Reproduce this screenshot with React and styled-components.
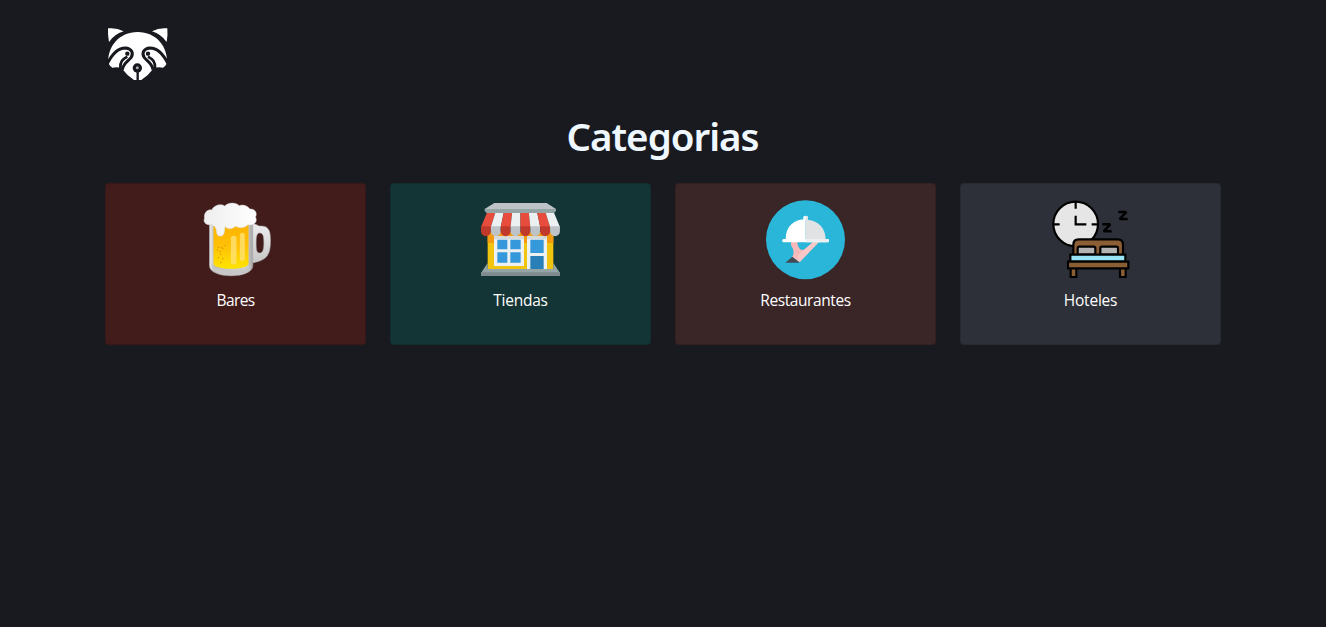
import React from 'react';
import styled, { createGlobalStyle } from 'styled-components';

const GlobalStyle = createGlobalStyle`
  *, *::before, *::after { box-sizing: border-box; }
  body {
    margin: 0;
    background: #191a1f;
    color: #f0f8ff;
    font: 400 16px/24px "Open Sans", "Noto Sans", sans-serif;
  }
`;

const Container = styled.main`
  width: 1140px;
  margin: 0 auto;
  padding: 26px 12px 0;
`;

const Logo = styled.svg`
  display: block;
  width: 66px;
  height: 56px;
`;

const Title = styled.h1`
  margin: 30px 0 23px;
  font-family: "Noto Sans", "Open Sans", sans-serif;
  font-size: 38.5px;
  font-weight: 600;
  line-height: 48px;
  letter-spacing: -1px;
  text-indent: -1px;
  text-align: center;
`;

const Grid = styled.section`
  display: grid;
  grid-template-columns: repeat(4, 1fr);
  gap: 24px;
`;

const Card = styled.article`
  display: flex;
  flex-direction: column;
  align-items: center;
  height: 162px;
  padding: 16px;
  border: 1px solid rgba(0, 0, 0, 0.125);
  border-radius: 4px;
  background: ${(p) => p.$tone};
`;

const Picture = styled.svg`
  display: block;
  width: 80px;
  height: 80px;
`;

const Label = styled.p`
  margin: 8px 0 0;
  color: #fff;
  font-size: 15.5px;
  letter-spacing: ${(p) => p.$tracking};
`;

const Raccoon = () => (
  <Logo viewBox="21 24 198 168" aria-label="Logo">
    <path fill="#fff" d="M30 31Q55 28 77 40Q48 49 33 72Q29 50 30 31ZM208 31Q184 28 162 40Q190 49 206 72Q210 50 208 31Z" />
    <path fill="#fff" d="M31 136C28 86 63 42 119 42S210 86 207 136Q203 144 195 149Q180 145 167 151Q152 172 130 186H108Q86 172 71 151Q58 145 43 149Q35 144 31 136Z" />
    <g fill="none" stroke="#17181d">
      <path strokeWidth="9" d="M28 137C41 111 59 90 82 90C101 91 108 106 99 119C90 130 76 135 73 155M210 137C197 111 179 90 156 90C137 91 130 106 139 119C148 130 162 135 165 155" />
      <path strokeWidth="8" d="M67 150C66 131 73 124 88 116M171 150C172 131 165 124 150 116" />
      <path strokeWidth="7" d="M119 158V190" />
    </g>
    <circle cx="88" cy="107" r="6.5" fill="#17181d" />
    <circle cx="150" cy="107" r="6.5" fill="#17181d" />
    <circle cx="118" cy="150" r="14" fill="#17181d" />
    <circle cx="118" cy="149" r="4.5" fill="#aaa" />
  </Logo>
);

const Beer = () => (
  <Picture viewBox="1.5 15 240 240" aria-hidden="true">
    <defs>
      <linearGradient id="glass">
        <stop stopColor="#ededed" /><stop offset=".12" stopColor="#bdbdbd" /><stop offset=".85" stopColor="#d2d2d2" /><stop offset="1" stopColor="#a3a3a3" />
      </linearGradient>
      <linearGradient id="ale" x2="0" y2="1">
        <stop stopColor="#ffb300" /><stop offset=".5" stopColor="#ffc107" /><stop offset="1" stopColor="#ffe500" />
      </linearGradient>
      <linearGradient id="foam">
        <stop stopColor="#eee" /><stop offset="1" stopColor="#fff" />
      </linearGradient>
      <linearGradient id="handle" x2="0" y2="1">
        <stop stopColor="#eee" /><stop offset="1" stopColor="#c6c6c6" />
      </linearGradient>
    </defs>
    <path fill="url(#handle)" stroke="#aaa" strokeWidth="1.5" fillRule="evenodd" d="M168 85Q181 87 191 93C218 91 225 104 225 135C225 180 216 195 170 204ZM193 114C186 113 182 120 182 142C182 165 183 174 192 174C203 174 205 162 205 143C205 121 202 115 193 114Z" />
    <path fill="url(#glass)" stroke="#b5b5b5" strokeWidth="1.5" d="M42 76H172V213C170 252 44 252 42 213Z" />
    <path fill="#c7c7c7" d="M48 205Q53 225 108 226T166 205Q170 241 108 241T48 205Z" />
    <path fill="url(#ale)" d="M54 88H159V207C155 226 58 226 54 207Z" />
    <g fill="#ffe273" opacity=".8">
      <rect x="106" y="122" width="17" height="86" rx="8" />
      <rect x="133" y="113" width="15" height="85" rx="7" />
    </g>
    <g fill="#d89114">
      <circle cx="70" cy="157" r="2.2" /><circle cx="79" cy="157" r="2" /><circle cx="89" cy="151" r="2" /><circle cx="66" cy="165" r="2" /><circle cx="74" cy="170" r="2.2" /><circle cx="82" cy="161" r="2" /><circle cx="76" cy="178" r="2" /><circle cx="69" cy="188" r="2" /><circle cx="82" cy="191" r="2" /><circle cx="76" cy="203" r="2" />
    </g>
    <path fill="url(#foam)" stroke="#d2d2d2" strokeWidth="1.5" d="M47 89C31 92 22 80 27 70C24 51 39 42 49 45C54 31 76 25 88 33C100 20 123 23 131 32C144 27 158 34 163 42C180 41 186 55 180 66C189 84 170 94 157 89C149 100 130 100 120 94C110 105 92 102 89 94L86 114C82 128 64 127 63 110Q63 93 47 89Z" />
  </Picture>
);

const RED = ['#e74c3c', '#c0392b'];
const WHITE = ['#ecf0f1', '#bdc3c7'];
const stripes = [RED, WHITE, RED, WHITE, RED, WHITE, RED, WHITE];

const Store = () => (
  <Picture viewBox="18 15 240 240" aria-hidden="true">
    <path fill="#f1c40f" d="M38 112H235V222H38Z" />
    <path fill="#f39c12" d="M38 112H235V144H38Z" />
    <path fill="#ecf0f1" d="M57 124H147V213H57ZM156 124H216V222H156Z" />
    <path fill="#d5dadd" d="M57 124H147V133H57ZM156 124H216V133H156Z" />
    <path fill="#3498db" d="M67 134H97V163H67ZM106 134H137V163H106ZM67 172H97V203H67ZM106 172H137V203H106ZM166 134H206V174H166Z" />
    <path fill="#2980b9" d="M166 183H206V222H166Z" />
    <path fill="#95a5a6" d="M38 204V222H235V204L255 234H18Z" />
    <path fill="#7f8c8d" d="M18 232H255V243H18Z" />
    {stripes.map(([light, dark], i) => {
      const top = 38 + i * 24.6;
      const left = 18 + i * 29.6;
      return (
        <g key={i}>
          <path fill={light} d={`M${top} 48h24.6L${left + 29.6} 96h-29.6Z`} />
          <path fill={dark} d={`M${left} 94h29.6v15a14.8 14.8 0 0 1-29.6 0Z`} />
        </g>
      );
    })}
    <path fill="#bdc3c7" d="M58 24H215L243 42H29Z" />
    <path fill="#95a5a6" d="M29 42H243V48L237 54H35L29 48Z" />
  </Picture>
);

const Dining = () => (
  <Picture viewBox="18 15 240 240" aria-hidden="true">
    <circle cx="136.5" cy="134" r="118.5" fill="#29b6d8" />
    <path fill="#f7b9b9" d="M93 141H112Q114 158 122 164H132L158 142H176L119 202L96 186Q107 171 93 151Z" />
    <path fill="#ffd0ce" d="M119 201L176 142H158L111 184Z" opacity=".65" />
    <path fill="#434a54" d="M76 203L97 185L119 203Z" />
    <path fill="#fff" d="M130 65Q137 60 144 65V75H130ZM77 133C77 95 101 73 137 73V133Z" />
    <path fill="#e0e2e4" d="M137 63Q144 62 144 67V74C175 77 197 100 197 133H137Z" />
    <rect x="67" y="132" width="140" height="10" rx="4" fill="#fff" />
    <path fill="#eceeef" d="M137 132H204Q207 134 206 138Q205 142 202 142H137Z" />
  </Picture>
);

const Hotel = () => (
  <Picture viewBox="21 16 240 240" aria-hidden="true">
    <g stroke="#000" strokeWidth="6.5">
      <circle cx="95" cy="88" r="67" fill="#e6e6e6" />
      <path fill="none" d="M95 22V42M28 89H47M143 89H162M95 63V89H127" />
      <path fill="none" strokeWidth="7.5" strokeLinejoin="bevel" d="M175 89H199L179 110H203M223 52H247L227 73H251" />
      <path fill="#8b5e34" d="M88 181V150Q88 134 104 134H221Q237 134 237 150V181Z" />
      <path fill="#b3b3b3" d="M101 180V161Q101 156 106 156H149Q154 156 154 161V180ZM169 180V161Q169 156 174 156H217Q222 156 222 161V180Z" />
      <path fill="#8b5e34" d="M80 219H97V247H80ZM228 219H245V247H228Z" />
      <path fill="#98e4f5" d="M79 180H244V201H79Z" />
      <path fill="#8b5e34" d="M72 201H253V221H72Z" />
    </g>
  </Picture>
);

const categories = [
  { name: 'Bares', tone: '#411c1b', Icon: Beer, tracking: '-0.6px' },
  { name: 'Tiendas', tone: '#143535', Icon: Store, tracking: '-0.25px' },
  { name: 'Restaurantes', tone: '#3a2527', Icon: Dining, tracking: '-0.42px' },
  { name: 'Hoteles', tone: '#2e3039', Icon: Hotel, tracking: '-0.2px' },
];

export default function App() {
  return (
    <>
      <GlobalStyle />
      <Container>
        <Raccoon />
        <Title>Categorias</Title>
        <Grid>
          {categories.map(({ name, tone, Icon, tracking }) => (
            <Card key={name} $tone={tone}>
              <Icon />
              <Label $tracking={tracking}>{name}</Label>
            </Card>
          ))}
        </Grid>
      </Container>
    </>
  );
}
